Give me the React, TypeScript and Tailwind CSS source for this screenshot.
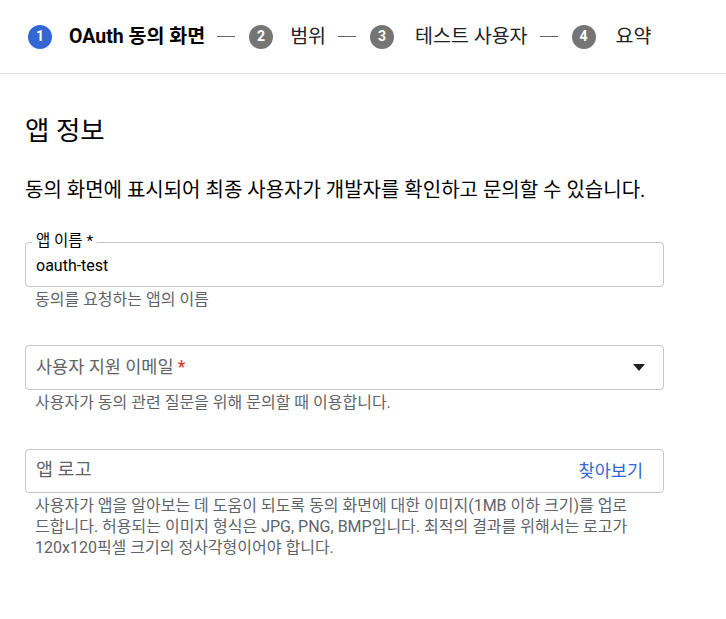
import React from 'react';

const font = { fontFamily: 'Roboto, "Noto Sans CJK KR", sans-serif' };

function Step({ n, label, active, gap = 'ml-[17px]' }: { n: number; label: string; active?: boolean; gap?: string }) {
  return (
    <div className="flex items-center">
      <span
        className={`flex h-6 w-6 items-center justify-center rounded-full text-[14px] font-bold text-white ${
          active ? 'bg-[#3367d6]' : 'bg-[#757575]'
        }`}
      >
        {n}
      </span>
      <span className={`${gap} text-[19.5px] ${active ? 'font-bold text-black' : 'text-[#202124]'}`}>{label}</span>
    </div>
  );
}

function Dash() {
  return <span className="ml-3 mr-[14px] h-px w-[18px] bg-[#5f6368]" />;
}

export default function App() {
  return (
    <div className="min-h-[619px] w-[726px] bg-white text-[#202124]" style={font}>
      <div className="flex h-[74px] items-center border-b border-[#e0e0e0] pl-7">
        <Step n={1} label="OAuth 동의 화면" active />
        <Dash />
        <Step n={2} label="범위" />
        <Dash />
        <Step n={3} label="테스트 사용자" gap="ml-[21px]" />
        <Dash />
        <Step n={4} label="요약" gap="ml-[20px]" />
      </div>

      <div className="pl-[25px] pr-[62px]">
        <h1 className="mt-[42px] text-[26.5px] leading-[30px] text-black">앱 정보</h1>
        <p className="mt-[30px] text-[20px] leading-[28px] text-black">
          동의 화면에 표시되어 최종 사용자가 개발자를 확인하고 문의할 수 있습니다.
        </p>

        <div className="mt-[38px]">
          <div className="relative flex h-[45px] items-center rounded border border-[#c6c6c6] px-[10px]">
            <span className="absolute -top-[11px] left-[6px] bg-white px-1 text-[15.5px] leading-[18px] text-black">앱 이름 *</span>
            <span className="mt-[2px] text-[16px] text-black">oauth-test</span>
          </div>
          <div className="px-[10px] pt-[4px] text-[16px] leading-[18px] text-[#5f6368]">동의를 요청하는 앱의 이름</div>
        </div>

        <div className="mt-[36px]">
          <div className="flex h-[45px] items-center justify-between rounded border border-[#c6c6c6] pl-[10px] pr-[18px]">
            <span className="text-[17.5px] text-[#5f6368]">
              사용자 지원 이메일 <span className="text-[#d93025]">*</span>
            </span>
            <svg width="12" height="7" viewBox="0 0 12 7">
              <path d="M0 0h12L6 7z" fill="#202124" />
            </svg>
          </div>
          <div className="px-[10px] pt-[4px] text-[16px] leading-[18px] text-[#5f6368]">
            사용자가 동의 관련 질문을 위해 문의할 때 이용합니다.
          </div>
        </div>

        <div className="mt-[37px]">
          <div className="flex h-[44px] items-center justify-between rounded border border-[#c6c6c6] pl-[10px] pr-[20px]">
            <span className="text-[18.5px] text-[#5f6368]">앱 로고</span>
            <span className="text-[17.5px] text-[#3367d6]">찾아보기</span>
          </div>
          <div className="whitespace-nowrap pl-[10px] pt-[2px] text-[16px] leading-[21px] text-[#5f6368]">
            사용자가 앱을 알아보는 데 도움이 되도록 동의 화면에 대한 이미지(1MB 이하 크기)를 업로
            <br />
            드합니다. 허용되는 이미지 형식은 JPG, PNG, BMP입니다. 최적의 결과를 위해서는 로고가
            <br />
            120x120픽셀 크기의 정사각형이어야 합니다.
          </div>
        </div>
      </div>
    </div>
  );
}
